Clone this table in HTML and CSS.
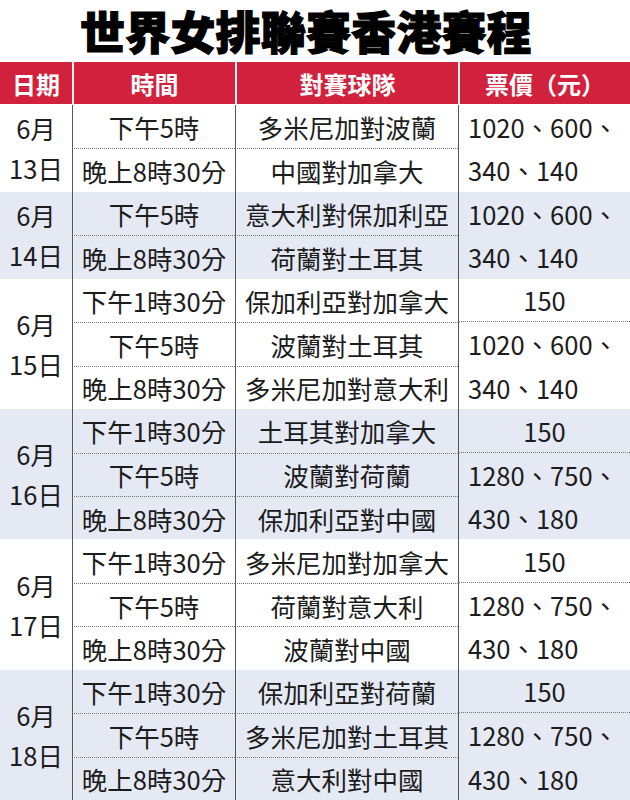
FILE: index.html
```html
<!DOCTYPE html>
<html lang="zh-Hant">
<head>
<meta charset="utf-8">
<link rel="stylesheet" href="styles.css">
</head>
<body>
<div class="page">
  <h1 class="title">世界女排聯賽香港賽程</h1>
  <div class="head">
    <div class="hc">日期</div>
    <div class="hc">時間</div>
    <div class="hc">對賽球隊</div>
    <div class="hc">票價（元）</div>
  </div>
  <div class="grid">
    <!-- 6/13 -->
    <div class="date s2">6月<br>13日</div>
    <div class="c time">下午5時</div>
    <div class="c team">多米尼加對波蘭</div>
    <div class="c price s2">1020、600、<br>340、140</div>
    <div class="c time dt">晚上8時30分</div>
    <div class="c team dt">中國對加拿大</div>

    <!-- 6/14 -->
    <div class="date s2 b">6月<br>14日</div>
    <div class="c time b">下午5時</div>
    <div class="c team b">意大利對保加利亞</div>
    <div class="c price s2 b">1020、600、<br>340、140</div>
    <div class="c time dt b">晚上8時30分</div>
    <div class="c team dt b">荷蘭對土耳其</div>

    <!-- 6/15 -->
    <div class="date s3">6月<br>15日</div>
    <div class="c time">下午1時30分</div>
    <div class="c team">保加利亞對加拿大</div>
    <div class="c price one">150</div>
    <div class="c time dt">下午5時</div>
    <div class="c team dt">波蘭對土耳其</div>
    <div class="c price s2">1020、600、<br>340、140</div>
    <div class="c time dt">晚上8時30分</div>
    <div class="c team dt">多米尼加對意大利</div>

    <!-- 6/16 -->
    <div class="date s3 b">6月<br>16日</div>
    <div class="c time b">下午1時30分</div>
    <div class="c team b">土耳其對加拿大</div>
    <div class="c price one b">150</div>
    <div class="c time dt b">下午5時</div>
    <div class="c team dt b">波蘭對荷蘭</div>
    <div class="c price s2 b">1280、750、<br>430、180</div>
    <div class="c time dt b">晚上8時30分</div>
    <div class="c team dt b">保加利亞對中國</div>

    <!-- 6/17 -->
    <div class="date s3">6月<br>17日</div>
    <div class="c time">下午1時30分</div>
    <div class="c team">多米尼加對加拿大</div>
    <div class="c price one">150</div>
    <div class="c time dt">下午5時</div>
    <div class="c team dt">荷蘭對意大利</div>
    <div class="c price s2">1280、750、<br>430、180</div>
    <div class="c time dt">晚上8時30分</div>
    <div class="c team dt">波蘭對中國</div>

    <!-- 6/18 -->
    <div class="date s3 b">6月<br>18日</div>
    <div class="c time b">下午1時30分</div>
    <div class="c team b">保加利亞對荷蘭</div>
    <div class="c price one b">150</div>
    <div class="c time dt b">下午5時</div>
    <div class="c team dt b">多米尼加對土耳其</div>
    <div class="c price s2 b">1280、750、<br>430、180</div>
    <div class="c time dt b">晚上8時30分</div>
    <div class="c team dt b">意大利對中國</div>
  </div>
</div>
</body>
</html>
```

FILE: styles.css
```css
html, body {
  margin: 0;
  padding: 0;
  background: #ffffff;
}

.page {
  width: 630px;
  height: 800px;
  overflow: hidden;
  font-family: "Noto Sans CJK TC", "Noto Sans CJK SC", sans-serif;
  color: #1c1c1c;
}

.title {
  margin: 0;
  padding: 0 18px 0 0;
  height: 62px;
  font-size: 45px;
  line-height: 62px;
  font-weight: 900;
  color: #000;
  text-align: center;
  letter-spacing: 0.2px;
  -webkit-text-stroke: 1.2px #000;
}

.head {
  display: grid;
  grid-template-columns: 72px 163px 223px 172px;
  height: 42px;
  background: #d2213d;
}

.hc {
  display: flex;
  align-items: center;
  justify-content: center;
  color: #fff;
  font-size: 24px;
  font-weight: 700;
}

.hc + .hc {
  border-left: 2px solid #f3f3f3;
}

.grid {
  margin-top: 1px;
  display: grid;
  grid-template-columns: 72px 163px 223px 172px;
  grid-auto-rows: 43.44px;
  font-size: 25.5px;
}

.date {
  display: flex;
  align-items: center;
  justify-content: center;
  text-align: center;
  line-height: 40px;
  background: #fff;
}

.c {
  border-left: 1.5px solid #555;
  display: flex;
  align-items: center;
  justify-content: center;
  white-space: nowrap;
  background: #fff;
}

.time, .team {
  text-align: center;
}

.price {
  justify-content: flex-start;
  padding-left: 9px;
  line-height: 43.44px;
}

.price.one {
  justify-content: center;
  padding-left: 0;
  border-bottom: 1px dotted #777;
}

.s2 { grid-row: span 2; }
.s3 { grid-row: span 3; }

.dt {
  border-top: 1px dotted #777;
}

.b {
  background: #e5e9f4;
}
```
